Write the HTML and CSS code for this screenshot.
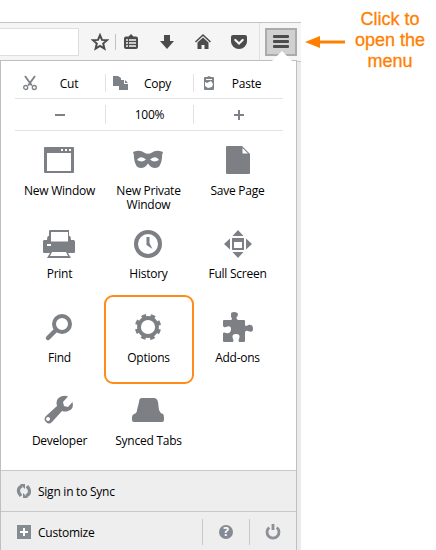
FILE: index.html
```
<!DOCTYPE html>
<html lang="en">
<head>
<meta charset="utf-8">
<title>Firefox menu</title>
<link rel="stylesheet" href="styles.css">
</head>
<body>
<main class="browser">
  <header class="toolbar">
    <div class="urlbar"></div>
    <svg class="tool star" viewBox="0 0 18 18"><path d="M9 2.2 11 6.9 16 7.2 12.2 10.5 13.4 15.6 9 12.9 4.6 15.6 5.8 10.5 2 7.2 7 6.9Z" fill="none" stroke="#4c4c4c" stroke-width="2"/></svg>
    <i class="tool-split"></i>
    <svg class="tool list" viewBox="0 0 18 18"><path d="M4 3.500H6.500L9 1l2.500 2.500H14Q16 3.500 16 5.500V14Q16 16 14 16H4Q2 16 2 14V5.500Q2 3.500 4 3.500Z" fill="#4c4c4c"/><path d="M4 7h2M7 7h7M4 10h2M7 10h7M4 13h2M7 13h7" stroke="#f5f5f5" stroke-width="1.400"/></svg>
    <svg class="tool down" viewBox="0 0 18 18"><path d="M6 2h6v6h4l-7 8-7-8h4Z" fill="#4c4c4c"/></svg>
    <svg class="tool home" viewBox="0 0 18 18"><path d="M1.500 9 9 2l7.500 7" fill="none" stroke="#4c4c4c" stroke-width="1.600"/><path d="M9 4.500 14.500 9.500V16h-4v-4h-3v4h-4V9.500Z" fill="#4c4c4c"/></svg>
    <svg class="tool pocket" viewBox="0 0 18 18"><path d="M3 2h12q2 0 2 2v4.500a8 7.500 0 0 1-16 0V4q0-2 2-2Z" fill="#4c4c4c"/><path d="M5.300 7 9 10.500 12.700 7" fill="none" stroke="#f5f5f5" stroke-width="2.200" stroke-linecap="round"/></svg>
    <i class="menu-split"></i>
    <div class="menu-button"><i></i><i></i><i></i></div>
  </header>

  <section class="panel">
    <svg class="pointer" viewBox="0 0 20 10"><path d="M0 10 10 0 20 10Z" fill="#fff"/></svg>
    <div class="edit-row">
      <div class="edit"><svg class="small" viewBox="0 0 16 16"><path d="M3 1 9.800 10.500M13 1 6.200 10.500" stroke="#7d8288" stroke-width="1.900"/><circle cx="3.700" cy="12.500" r="2" fill="none" stroke="#7d8288" stroke-width="1.300"/><circle cx="12.300" cy="12.500" r="2" fill="none" stroke="#7d8288" stroke-width="1.300"/></svg><span>Cut</span></div>
      <div class="edit"><svg class="small" viewBox="0 0 16 16"><path d="M0 1h5l3 2v2H6v6H0ZM6 5h5v4h4v6H6ZM12 5l3 3h-3Z" fill="#7d8288"/></svg><span>Copy</span></div>
      <div class="edit"><svg class="small" viewBox="0 0 16 16"><path d="M4 2h2l2-1 2 1h2q1 0 1 1v11q0 1-1 1H4q-1 0-1-1V3q0-1 1-1Z" fill="#7d8288"/><path d="M5 4h6v1H5ZM4 7l2 1 4-2 2 3-1 3-4 1-3-2Z" fill="#fff"/></svg><span>Paste</span></div>
    </div>
    <div class="zoom-row">
      <div><svg class="sign" viewBox="0 0 10 10"><path d="M0 5h10" stroke="#7d8288" stroke-width="2"/></svg></div>
      <div>100%</div>
      <div><svg class="sign" viewBox="0 0 10 10"><path d="M0 5h10M5 0v10" stroke="#7d8288" stroke-width="2"/></svg></div>
    </div>

    <div class="tiles">
      <div class="tile"><svg viewBox="0 0 33 32"><path fill-rule="evenodd" d="M2 3h28q1 0 1 1v24q0 1-1 1H2q-1 0-1-1V4q0-1 1-1ZM4 9v18h24V9Z"/><path d="M18 5h2v2h-2ZM22 5h2v2h-2ZM26 5h2v2h-2Z" fill="#fff"/></svg><span>New Window</span></div>
      <div class="tile"><svg viewBox="0 0 33 32"><path fill-rule="evenodd" d="M1 8Q8 5.500 12 8.500Q16 11 20 8.500Q24 5.500 31 8Q30 10 30 14Q29 24 23 24Q19 24 16 19.500Q13 24 9 24Q3 24 2 14Q2 10 1 8ZM5 16Q10 19 14 15.500Q8 11 5 16ZM27 16Q22 19 18 15.500Q24 11 27 16Z"/></svg><span>New Private<br>Window</span></div>
      <div class="tile"><svg viewBox="0 0 33 32"><path d="M6 2H21L29 10V29q0 1-1 1H6q-1 0-1-1V3q0-1 1-1Z"/><path d="M21.500 4v5.500H27Z" fill="#fff"/></svg><span>Save Page</span></div>
      <div class="tile"><svg viewBox="0 0 33 32"><path fill-rule="evenodd" d="M7 3h19v6h1q1 1 1 4h3q1 1 1 2v10q0 1-1 1H25l3 5H4l3-5H1q-1 0-1-1V15q0-2 1-2h3q0-3 1-4h1V4q0-1 1-1ZM8 5v9.500h17V5ZM4 17v2h4v-2ZM9 25l-2 4h18l-2-4Z"/></svg><span>Print</span></div>
      <div class="tile"><svg viewBox="0 0 33 32"><circle cx="16" cy="17" r="12" fill="none" stroke="#7c7f84" stroke-width="4"/><path d="M14.500 10h3v6l3 6-6-4Z"/></svg><span>History</span></div>
      <div class="tile"><svg viewBox="0 0 33 32"><path fill-rule="evenodd" d="M17 3l5.500 6h-11ZM17 31l5.500-6h-11ZM3 17l6-5.500v11ZM31 17l-6-5.500v11ZM11 11h12v12H11ZM13 15v6h8v-6Z"/></svg><span>Full Screen</span></div>
      <div class="tile"><svg viewBox="0 0 33 32"><circle cx="19" cy="13" r="8" fill="none" stroke="#7c7f84" stroke-width="4"/><path d="M12.500 19.500 5 27" stroke="#7c7f84" stroke-width="4.500" stroke-linecap="round"/></svg><span>Find</span></div>
      <div class="tile chosen"><svg viewBox="0 0 33 32"><circle cx="16" cy="16" r="9" fill="none" stroke="#7c7f84" stroke-width="3.800"/><circle cx="16" cy="16" r="11.700" fill="none" stroke="#7c7f84" stroke-width="2.800" stroke-dasharray="4.600 4.589" stroke-dashoffset="-2.300"/></svg><span>Options</span></div>
      <div class="tile"><svg viewBox="0 0 33 32"><path d="M2 10Q2 9 3 9H10Q12 8 10 6V3Q10 1 13 1Q17 1 17 3.500Q17 5 15.500 6Q15 8 17 9H23Q24 9 24 10V14Q25 16 27 14Q32 13 32 18Q32 22 27 20Q25 19 24 21V30Q24 31 23 31H18Q17 29 18 28Q20 23 15 23Q10 23 12 28Q13 29 12 31H3Q2 31 2 30V22Q3 21 5 22Q10 23 10 18Q10 14 5 16Q3 17 2 15Z"/></svg><span>Add-ons</span></div>
      <div class="tile"><svg viewBox="0 0 33 32"><path fill-rule="evenodd" d="M25 2.500 20 8l1 4 4 1 4.500-5q2 7-4.500 9-3 1-6 0L9 28q-3 3-6 0-3-3 0-6L14 12Q12 5 18 2.500 22 1 25 2.500ZM5 23a2 2 0 1 0 .1 0Z"/></svg><span>Developer</span></div>
      <div class="tile"><svg viewBox="0 0 33 32"><path d="M10 4H22Q25 4 26 8L27 16Q28 19 31 20Q32 21 32 24V26Q32 28 30 28H2Q0 28 0 26V23Q0 21 2 20Q5 19 5 16L7 8Q7 4 10 4Z"/></svg><span>Synced Tabs</span></div>
    </div>

    <footer>
      <div class="sync"><svg viewBox="0 0 16 16"><path d="M6 3Q1 5 3 10l2 3M10 13q5-2 3-7l-2-3" fill="none" stroke="#858b92" stroke-width="3.200"/><path d="M4 1h5v5ZM12 15H7v-5Z"/></svg><span>Sign in to Sync</span></div>
      <div class="custom">
        <svg viewBox="0 0 16 16"><path d="M1 1h14v14H1Z"/><path d="M4 8h8M8 4v8" stroke="#fff" stroke-width="2"/></svg><span>Customize</span>
        <div class="help"><svg viewBox="0 0 16 16"><circle cx="8" cy="8" r="7"/></svg><b>?</b></div>
        <div class="power"><svg viewBox="0 0 16 16"><path d="M4.200 3.500a6 6 0 1 0 7.600 0" fill="none" stroke="#8d9196" stroke-width="2.800"/><path d="M8 0v6" stroke="#8d9196" stroke-width="2.800"/></svg></div>
      </div>
    </footer>
  </section>
</main>
<aside class="note">
  <svg viewBox="0 0 40 12"><path d="M0 6 15 0v12Z"/><path d="M14 6h26" stroke="#ff8000" stroke-width="3"/></svg>
  <p>Click to<br>open the<br>menu</p>
</aside>
</body>
</html>
```

FILE: styles.css
```
*, *::after { box-sizing: border-box; }
body {
  margin: 0;
  width: 436px;
  height: 550px;
  overflow: hidden;
  display: flex;
  background: #fff;
  color: #000;
  font: 12px/14px "Open Sans", "Noto Sans", sans-serif;
  letter-spacing: -0.25px;
}
svg { display: block; flex: none; }
.browser {
  width: 301px;
  height: 550px;
  padding-top: 22px;
  background: linear-gradient(#fff 22px, #c8c8c8 22px, #c8c8c8 62px, #ebebeb 62px);
}
.toolbar {
  display: flex;
  align-items: center;
  height: 39px;
  padding-bottom: 1px;
  margin-bottom: -1px;
  border-top: 1px solid #c4c4c4;
  background: #f5f5f5;
}
.urlbar { width: 79px; height: 28px; border: 1px solid #dedede; border-left: 0; background: #fff; }
.tool { width: 18px; height: 18px; }
.star { margin-left: 12px; }
.tool-split { width: 1px; height: 16px; margin-left: 6px; background: #c2c2c2; }
.list { margin-left: 6px; }
.down, .home, .pocket { margin-left: 18px; }
.menu-split { align-self: stretch; width: 1px; margin-left: 11px; background: #e0e0e0; }
.menu-button {
  display: flex;
  flex-direction: column;
  align-items: center;
  gap: 2px;
  width: 32px;
  height: 28px;
  margin-left: 5px;
  padding-top: 5px;
  border: 2px solid #ababab;
  background: #d0d0d0;
}
.menu-button i { width: 16px; height: 3px; border-radius: 1px; background: #4c4c4c; }
.panel {
  position: relative;
  width: 297px;
  height: 490px;
  border: 1px solid #bfbfbf;
  border-bottom: 0;
  background: #fff;
}
.pointer { position: absolute; right: 4px; top: -10px; width: 20px; height: 10px; }
.edit-row, .zoom-row { display: grid; grid-template-columns: 90px 88px 90px; width: 268px; margin-left: 14px; border-bottom: 1px solid #e2e2e2; }
.edit-row { height: 38px; padding: 13px 0 6px; }
.zoom-row { height: 32px; padding: 6px 0; }
.edit { display: flex; align-items: center; }
.edit span { flex: 1; padding: 2px 5px 0 0; text-align: center; }
.edit + .edit span { padding-right: 7px; }
.edit + .edit, .zoom-row div + div { border-left: 1px solid #e2e2e2; }
.small { width: 16px; height: 16px; margin-left: 7px; }
.zoom-row div { display: flex; align-items: center; justify-content: center; padding-top: 1px; }
.sign { width: 10px; height: 10px; margin-top: -1px; }
.tiles { display: grid; grid-template: 83px 84px 83px 77px / repeat(3, 89px); margin: 12px 0 0 14px; }
.tile { position: relative; display: flex; flex-direction: column; align-items: center; padding-top: 1px; text-align: center; }
.tile svg { width: 33px; height: 32px; margin-bottom: 8px; fill: #7c7f84; }
.tile span { white-space: nowrap; }
.chosen::after { content: ""; position: absolute; left: 0; top: -15px; width: 90px; height: 89px; border: 2px solid #ff8c1a; border-radius: 9px; }
footer { background: #eee; }
footer svg { width: 16px; height: 16px; fill: #858b92; }
.sync, .custom { display: flex; align-items: center; border-top: 1px solid #c8c8c8; padding-left: 15px; }
.sync { height: 41px; }
.custom { height: 41px; }
.sync span, .custom span { margin-left: 6px; padding-top: 2px; }
.help, .power { position: relative; display: flex; align-items: center; justify-content: center; width: 47px; height: 26px; border-left: 1px solid #c8c8c8; }
.help { margin-left: auto; }
.help b { position: absolute; color: #fff; }
.note { display: flex; align-items: flex-start; color: #ff8000; }
.note svg { width: 40px; height: 12px; margin: 36px 0 0 4px; fill: #ff8000; }
.note p { margin: 9px 0 0 10px; text-align: center; letter-spacing: 0; font: 18px/21px "Liberation Sans", Arial, sans-serif; -webkit-text-stroke: 0.3px #ff8000; }
```
